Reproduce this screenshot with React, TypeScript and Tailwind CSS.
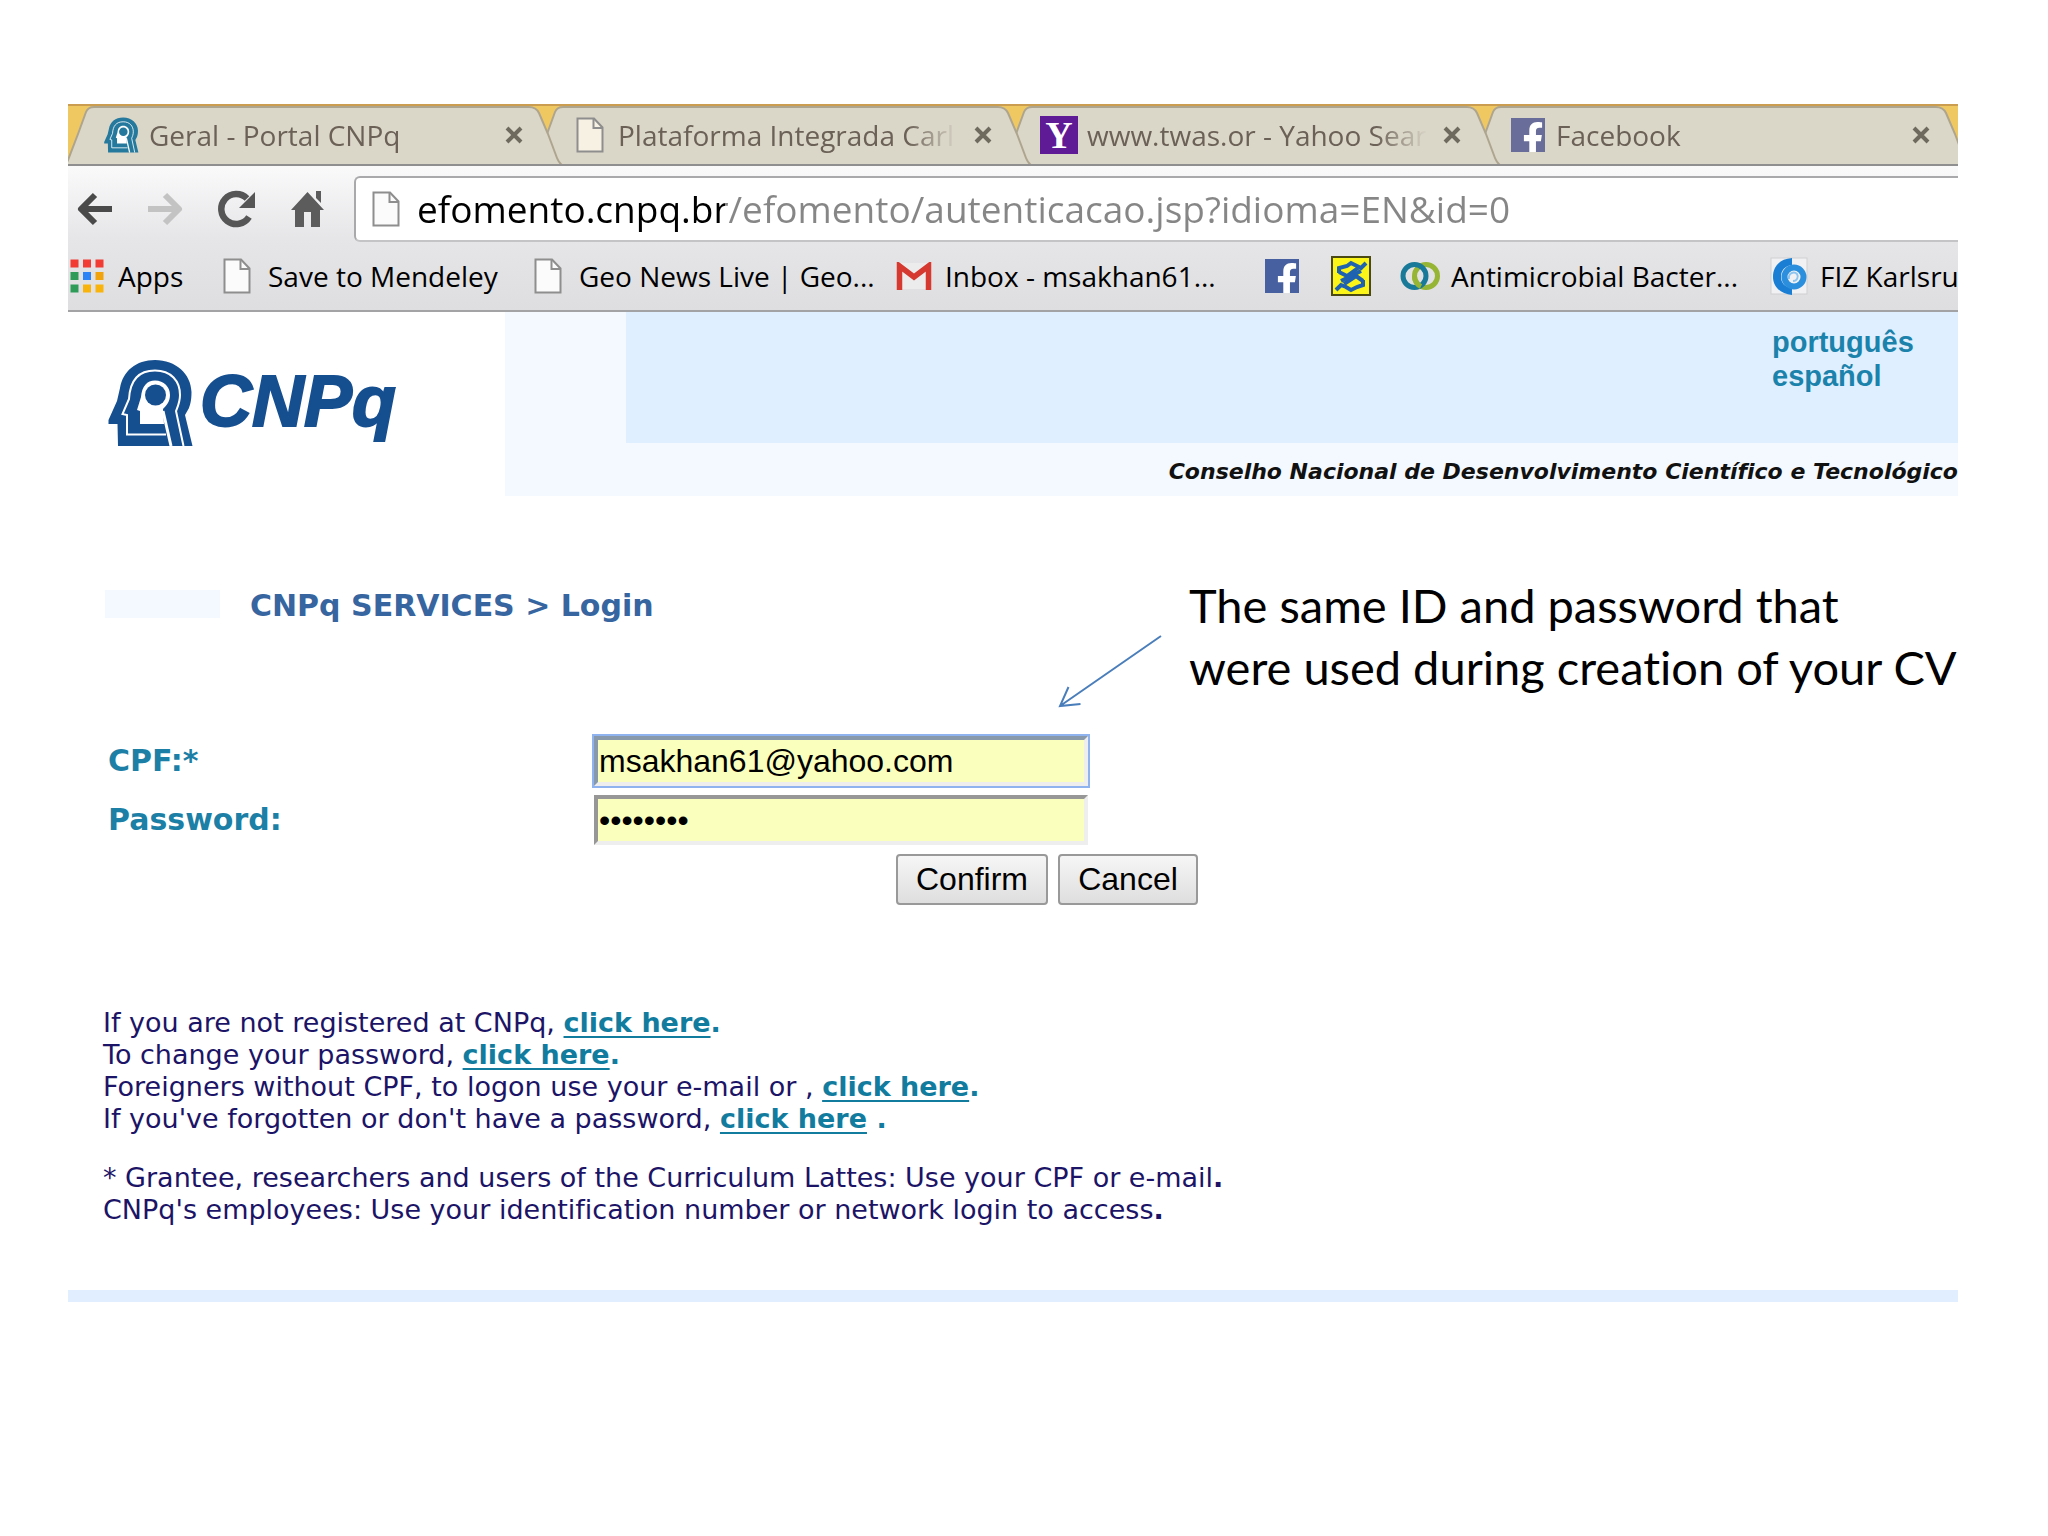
import type { ReactNode } from "react"
import { FaFacebookF } from "react-icons/fa"

function PageIcon({ fill = "#fbfbfb" }: { fill?: string }) {
  return (
    <svg viewBox="0 0 28 36" className="h-9 w-7 shrink-0">
      <path d="M1.5 1.5H18L26.5 10.5V34.5H1.5Z" fill={fill} stroke="#8e8e8e" strokeWidth="2" />
      <path d="M17.5 1.5V11H26.5" fill="none" stroke="#8e8e8e" strokeWidth="2" />
    </svg>
  )
}

function HeadLogo({ color, className }: { color: string; className: string }) {
  return (
    <svg viewBox="0 0 86 88" className={className}>
      <path
        d="M0.5 61L9 42L12 29C15 12 28 1 47 1C68 1 83 15 83.5 33C83.5 42 82 46 81 49L77 56L84.5 87H10L9.5 65H0.5Z"
        fill={color}
      />
      <path
        d="M58 75.5H19V56L14.5 55L21 40C22 22 30 11.5 47 11.5C63 11.5 72 22 72 36C72 43 70 47 68 52L75.5 87"
        fill="none"
        stroke="#fff"
        strokeWidth="2"
      />
      <path d="M55 52L63 87" stroke="#fff" strokeWidth="3" />
      <path d="M32 65V52L29 51L33 38C34 27 39 21.5 47 21.5C56 21.5 62 28 62 36C62 43 58 47 55 50L56 65Z" fill="#fff" />
      <circle cx="47.5" cy="36" r="10.5" fill={color} />
    </svg>
  )
}

function FacebookIcon({ className }: { className: string }) {
  return (
    <span className={`relative block h-[34px] w-[34px] shrink-0 overflow-hidden ${className}`}>
      <FaFacebookF className="absolute right-px -bottom-1 h-[34px] w-[22px] text-white" />
    </span>
  )
}

function YahooIcon() {
  return (
    <span className="flex h-[38px] w-[38px] shrink-0 items-center justify-center bg-[#5f1a96] font-['Liberation_Serif',serif] text-[38px] leading-none font-bold text-white">
      Y
    </span>
  )
}

function AppsIcon() {
  const colors = ["#f23b32", "#f23b32", "#f23b32", "#2e9b58", "#2b83f6", "#f0a30c", "#2e9b58", "#f8b30c", "#f8b30c"]
  return (
    <svg viewBox="0 0 34 34" className="h-[34px] w-[34px] shrink-0">
      {colors.map((color, i) => (
        <rect key={i} x={(i % 3) * 12.5 + 0.5} y={Math.floor(i / 3) * 12.5 + 0.5} width="8" height="8" fill={color} />
      ))}
    </svg>
  )
}

function GmailIcon() {
  return (
    <svg viewBox="0 0 36 28" className="h-7 w-9 shrink-0">
      <rect x="1" y="1" width="34" height="26" fill="#ececec" />
      <path d="M3.5 28V4L18 15L32.5 4V28" fill="none" stroke="#d5392f" strokeWidth="5.5" />
    </svg>
  )
}

function BancoIcon() {
  return (
    <svg viewBox="0 0 40 40" className="h-10 w-10 shrink-0">
      <rect x="1" y="1" width="38" height="38" fill="#fbf51a" stroke="#4a4a12" strokeWidth="2" />
      <g fill="none" stroke="#1f62b0" strokeWidth="4">
        <path d="M8 17V12L16 10L20 7L26 10L30 12L35 7" />
        <path d="M5 34L10 29L15 31L20 34L26 31L32 29V24" />
        <path d="M8 16L16 20L27 12" />
        <path d="M32 25L25 20L13 28" />
        <path d="M10 25L30 15" />
      </g>
    </svg>
  )
}

function RingsIcon() {
  return (
    <svg viewBox="0 0 40 32" className="h-8 w-10 shrink-0" fill="none" strokeWidth="5">
      <circle cx="26" cy="16" r="11.5" stroke="#97b534" />
      <circle cx="14.5" cy="16" r="11.5" stroke="#187a98" />
      <path d="M14.5 16A11.5 11.5 0 0 0 21 26.500" stroke="#97b534" />
    </svg>
  )
}

function FizIcon() {
  return (
    <svg viewBox="0 0 38 38" className="h-[38px] w-[38px] shrink-0">
      <rect x="1" y="1" width="36" height="36" fill="#f1f1f3" stroke="#cfcfd2" />
      <path d="M22 1C9 2 3 10 3 20C3 30 11 37 22 38V31C15 30 11 26 11 20C11 13 15 9 22 8Z" fill="#1a7fd4" />
      <circle cx="24" cy="20" r="9.500" fill="none" stroke="#2b8fdd" strokeWidth="6" />
      <path d="M19 22C18 16 24 14 27 17C29 20 27 24 23 24" fill="none" stroke="#8cc4ef" strokeWidth="2" />
    </svg>
  )
}

type TabProps = { icon: ReactNode; title: string; layer: string }

function Tab({ icon, title, layer }: TabProps) {
  return (
    <div className={`relative flex h-[58px] w-[469px] shrink-0 items-center pb-px pl-[34px] ${layer}`}>
      <svg viewBox="0 2 500 60" className="absolute top-0 left-0 -z-10 h-[60px] w-[500px]">
        <path
          d="M-3 62L0 56L10 30L18 8Q20 3 26 3H461Q468 3 471 9L480 30L489 54Q491 59 495 62Z"
          fill="#dad6c8"
          stroke="#aea58f"
          strokeWidth="2"
        />
      </svg>
      <span className="flex w-[38px] shrink-0 justify-center">{icon}</span>
      <span className="ml-[9px] w-[340px] overflow-hidden mask-r-from-85% text-[28px] leading-9 whitespace-nowrap text-[#6b6156]">
        {title}
      </span>
      <button aria-label="Close tab" className="ml-4">
        <svg viewBox="0 0 18 18" className="h-[18px] w-[18px]">
          <path d="M2 2L16 16M16 2L2 16" stroke="#6e6a5e" strokeWidth="4" />
        </svg>
      </button>
    </div>
  )
}

function Bookmark({ icon, label, width }: { icon: ReactNode; label?: string; width: string }) {
  return (
    <a href="#" aria-label={label ?? "Bookmark"} className={`flex shrink-0 items-center whitespace-nowrap ${width}`}>
      <span className="flex w-[38px] shrink-0 justify-center">{icon}</span>
      {label && <span className="ml-3">{label}</span>}
    </a>
  )
}

function NavIcons() {
  return (
    <div className="flex items-center gap-[34px] pl-2">
      <button aria-label="Back">
        <svg viewBox="0 0 37 36" className="h-9 w-[37px]" fill="none" stroke="#4a4a4a" strokeWidth="6">
          <path d="M36 18H5M19 4L5 18L19 32" strokeLinejoin="round" />
        </svg>
      </button>
      <button aria-label="Forward">
        <svg viewBox="0 0 37 36" className="h-9 w-[37px]" fill="none" stroke="#c3c3c3" strokeWidth="6">
          <path d="M1 18H32M18 4L32 18L18 32" strokeLinejoin="round" />
        </svg>
      </button>
      <button aria-label="Reload">
        <svg viewBox="0 0 37 38" className="h-[38px] w-[37px]">
          <path d="M31 27A15 15 0 1 1 29 8.5" fill="none" stroke="#565656" strokeWidth="6.5" />
          <path d="M37 2V18H21Z" fill="#565656" />
        </svg>
      </button>
      <button aria-label="Home">
        <svg viewBox="0 0 37 38" className="h-[38px] w-[37px]" fill="#5c5c5c">
          <path d="M18.5 2L35 20H31V37H22V22H15V37H6V20H2Z" />
          <path d="M27 1H32V13L27 8Z" />
        </svg>
      </button>
    </div>
  )
}

function HelpLink({ space = "" }: { space?: string }) {
  return (
    <span className="font-bold text-[#127c9f]">
      <a href="#" className="underline decoration-2 underline-offset-4">
        click here
      </a>
      {space}.
    </span>
  )
}

export default function App() {
  return (
    <main className="min-h-screen bg-white pt-26 pr-[90px] pl-17 font-['Open_Sans',sans-serif] text-black [font-variant-ligatures:none]">
      {/* Browser tabs */}
      <div className="isolate flex h-[62px] overflow-hidden border-t-2 border-b-2 border-t-[#cb9d50] border-b-[#8f8f8f] bg-[#f0c862]">
        <Tab layer="z-40" title="Geral - Portal CNPq" icon={<HeadLogo color="#25799d" className="h-9 w-[35px]" />} />
        <Tab layer="z-30" title="Plataforma Integrada Carl" icon={<PageIcon fill="#f6f1e2" />} />
        <Tab layer="z-20" title="www.twas.or - Yahoo Sear" icon={<YahooIcon />} />
        <Tab layer="z-10" title="Facebook" icon={<FacebookIcon className="bg-[#686d99]" />} />
      </div>

      {/* Toolbar */}
      <div className="border-b-2 border-[#a3a3a6] bg-linear-to-b from-[#fafafb] via-[#e6e6e8] to-[#dedee0] pt-[10px]">
        <div className="flex items-center">
          <NavIcons />
          <div className="ml-7 flex h-[66px] grow items-center gap-[17px] rounded-l-md border-2 border-r-0 border-[#a9a9ab] border-b-[#c4c4c6] bg-white pl-4">
            <PageIcon />
            <input
              aria-label="Address"
              defaultValue="efomento.cnpq.br/efomento/autenticacao.jsp?idioma=EN&id=0"
              className="grow bg-[linear-gradient(to_right,#000_308px,#868686_308px)] bg-clip-text text-[37px] leading-[50px] text-transparent outline-none"
            />
          </div>
        </div>
        <nav className="flex h-[68px] items-center overflow-hidden pb-px text-[28px] leading-9">
          <Bookmark width="w-[150px]" label="Apps" icon={<AppsIcon />} />
          <Bookmark width="w-[311px]" label="Save to Mendeley" icon={<PageIcon />} />
          <Bookmark width="w-[366px]" label="Geo News Live | Geo..." icon={<PageIcon />} />
          <Bookmark width="w-[368px]" label="Inbox - msakhan61..." icon={<GmailIcon />} />
          <Bookmark width="w-[69px]" icon={<FacebookIcon className="bg-[#4760a0]" />} />
          <Bookmark width="w-[69px]" icon={<BancoIcon />} />
          <Bookmark width="w-[369px]" label="Antimicrobial Bacter..." icon={<RingsIcon />} />
          <Bookmark width="w-[188px]" label="FIZ Karlsru" icon={<FizIcon />} />
        </nav>
      </div>

      {/* Site header */}
      <header className="flex">
        <div className="flex w-[437px] shrink-0 items-start pt-[47px] pl-10">
          <HeadLogo color="#164f90" className="h-[88px] w-[86px]" />
          <span className="ml-[6px] pt-[6px] font-['Liberation_Sans',sans-serif] text-[72px] leading-[72px] font-bold text-[#164f90] italic [-webkit-text-stroke:2px_#164f90]">
            CNPq
          </span>
        </div>
        <div className="grow bg-[#f4f9ff]">
          <div className="ml-[121px] flex h-[131px] justify-end bg-[#e0efff] pt-[13px]">
            <ul className="w-[186px] font-['Liberation_Sans',sans-serif] text-[29px] leading-[34px] font-bold text-[#1b83ab]">
              <li>
                <a href="#">português</a>
              </li>
              <li>
                <a href="#">español</a>
              </li>
            </ul>
          </div>
          <p className="h-[53px] pt-[13px] text-right font-['DejaVu_Sans',sans-serif] text-[22px] leading-8 font-bold whitespace-nowrap text-[#111] italic">
            Conselho Nacional de Desenvolvimento Científico e Tecnológico
          </p>
        </div>
      </header>

      {/* Section title and note */}
      <div className="flex items-start pt-[78px] pl-[37px] font-['DejaVu_Sans',sans-serif]">
        <div className="mt-4 h-7 w-[115px] bg-[#f3f9ff]" />
        <h1 className="mt-4 ml-[30px] text-[30px] leading-8 font-bold text-[#36659f]">CNPq SERVICES &gt; Login</h1>
        <p className="relative ml-auto w-[769px] font-['Lato',sans-serif] text-[47px] leading-[62px] whitespace-nowrap">
          The same ID and password that
          <br />
          were used during creation of your CV
          <svg
            viewBox="0 0 106 76"
            className="absolute top-[60px] right-full mr-[26px] h-[76px] w-[106px]"
            fill="none"
            stroke="#4a7ebb"
            strokeWidth="2"
          >
            <path d="M104 2L3 72M11.500 53L3 72L23.500 70" />
          </svg>
        </p>
      </div>

      {/* Login form */}
      <form className="pt-[38px] pl-10 font-['DejaVu_Sans',sans-serif]">
        <div className="flex flex-col gap-[9px] text-[30px] leading-9 font-bold text-[#1b7fa6]">
          <div className="flex items-center">
            <label htmlFor="cpf" className="w-[486px]">
              CPF:*
            </label>
            <input
              id="cpf"
              defaultValue="msakhan61@yahoo.com"
              className="h-[50px] w-[494px] border-4 border-t-[#8799ab] border-r-[#eee] border-b-[#eee] border-l-[#8799ab] bg-[#faffbd] pl-px font-['Liberation_Sans',sans-serif] text-[32px] leading-9 font-normal text-black ring-2 ring-[#8fb3ee] outline-none"
            />
          </div>
          <div className="flex items-center">
            <label htmlFor="password" className="w-[486px]">
              Password:
            </label>
            <input
              id="password"
              type="password"
              defaultValue="12345678"
              className="h-[50px] w-[494px] border-4 border-t-[#979797] border-r-[#eee] border-b-[#eee] border-l-[#979797] bg-[#faffbd] pl-px font-['Liberation_Sans',sans-serif] text-[32px] leading-9 font-normal text-black outline-none"
            />
          </div>
        </div>
        <div className="mt-[9px] ml-[788px] flex gap-[10px] font-['Liberation_Sans',sans-serif] text-[32px] leading-9">
          <button
            type="button"
            className="h-[51px] w-[152px] rounded-sm border-2 border-[#999] bg-linear-to-b from-[#f6f6f6] to-[#dedede] pb-px"
          >
            Confirm
          </button>
          <button
            type="button"
            className="h-[51px] w-[140px] rounded-sm border-2 border-[#999] bg-linear-to-b from-[#f6f6f6] to-[#dedede] pb-px"
          >
            Cancel
          </button>
        </div>
      </form>

      {/* Help */}
      <section className="flex flex-col gap-[27px] pt-[102px] pl-[35px] font-['DejaVu_Sans',sans-serif] text-[27px] leading-8 text-[#1c1466]">
        <p>
          If you are not registered at CNPq, <HelpLink />
          <br />
          To change your password, <HelpLink />
          <br />
          Foreigners without CPF, to logon use your e-mail or , <HelpLink />
          <br />
          If you've forgotten or don't have a password, <HelpLink space=" " />
        </p>
        <p>
          * Grantee, researchers and users of the Curriculum Lattes: Use your CPF or e-mail
          <span className="font-bold">.</span>
          <br />
          CNPq's employees: Use your identification number or network login to access
          <span className="font-bold">.</span>
        </p>
      </section>

      <div className="mt-16 h-3 bg-[#e0eeff]" />
    </main>
  )
}
